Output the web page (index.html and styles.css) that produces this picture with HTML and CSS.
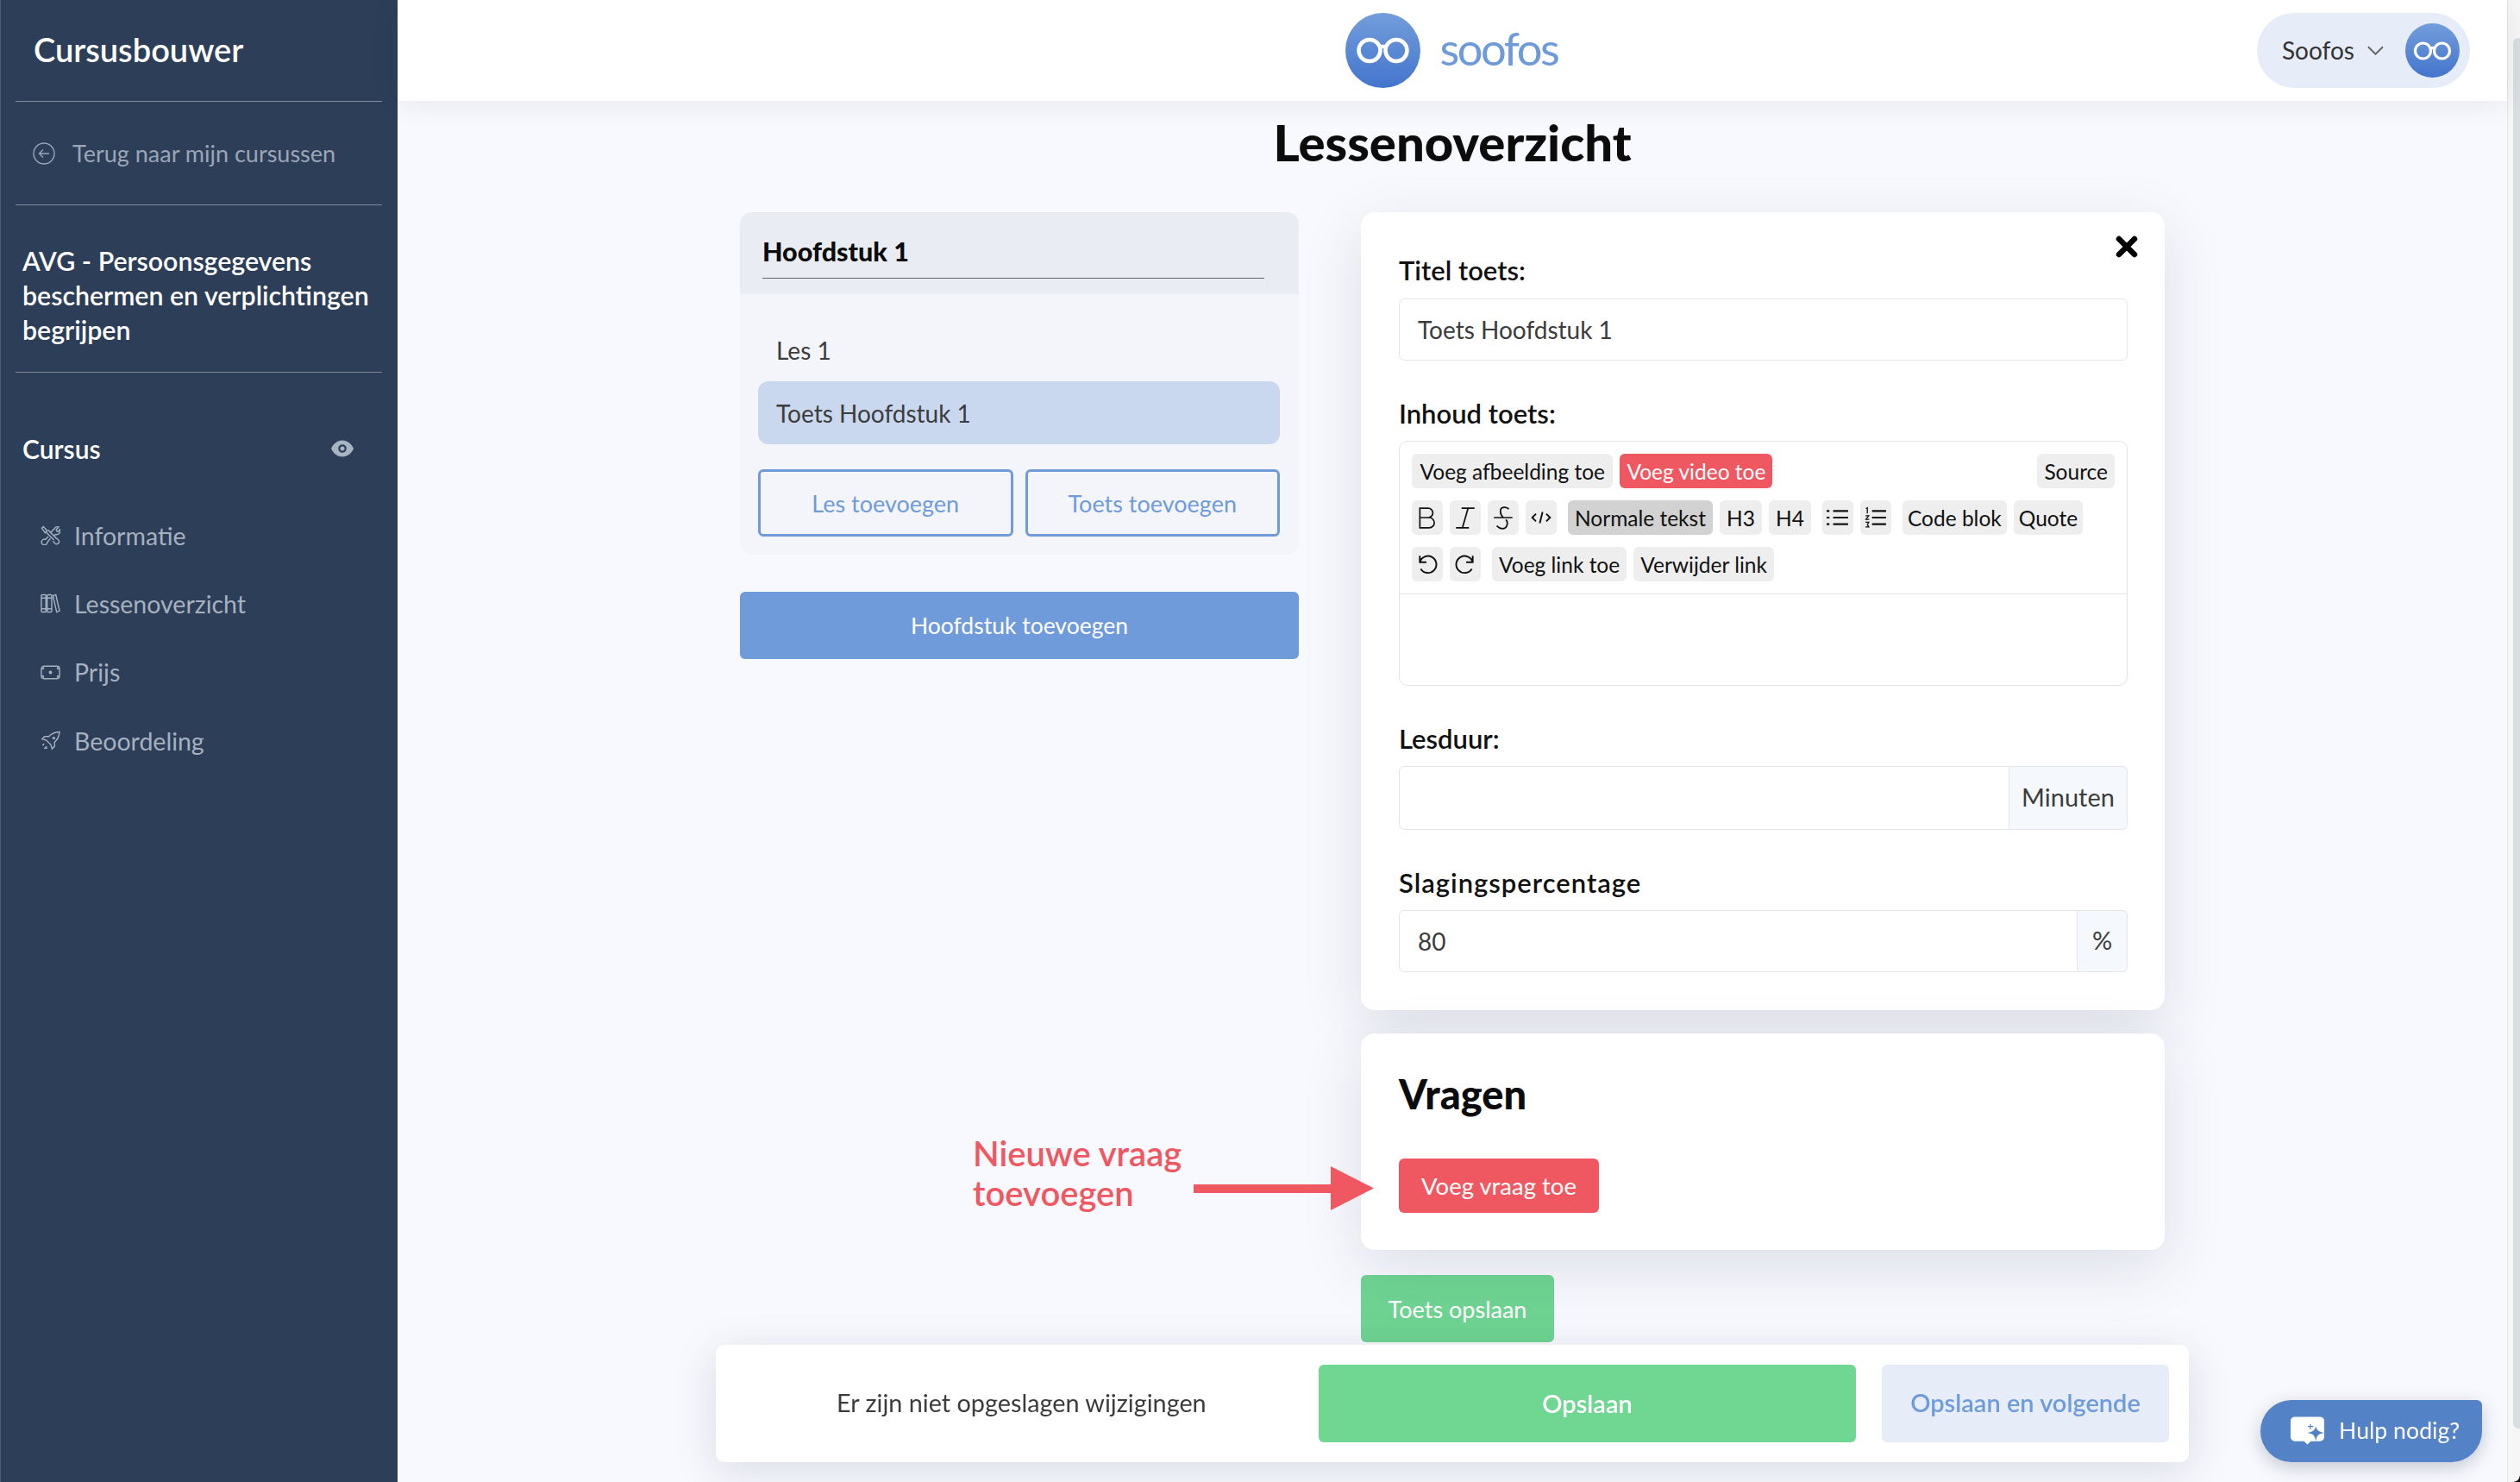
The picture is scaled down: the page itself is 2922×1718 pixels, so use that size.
FILE: index.html
```html
<!DOCTYPE html>
<html lang="nl">
<head>
    <meta charset="UTF-8">
    <meta name="viewport" content="width=device-width, initial-scale=1.0">
    <title>Cursusbouwer - Lessenoverzicht</title>
    <link rel="stylesheet" href="styles.css">
</head>
<body>
    <aside class="sidebar">
        <div class="brand">Cursusbouwer</div>
        <a class="back-link">
            <svg class="back-icon" viewBox="0 0 26 26" fill="none" stroke="currentColor" stroke-width="1.400"><circle cx="13" cy="13" r="12"/><path d="M19 13H7.500M12 8.500 7.500 13l4.500 4.500"/></svg>
            <span>Terug naar mijn cursussen</span>
        </a>
        <div class="course-title">AVG - Persoonsgegevens beschermen en verplichtingen begrijpen</div>
        <div class="section-row">
            <span>Cursus</span>
            <svg class="eye-icon" viewBox="0 0 26 20"><path fill-rule="evenodd" fill="currentColor" d="M13 .5C19 .5 24 5 26 10c-2 5-7 9.500-13 9.500S2 15 0 10C2 5 7 .5 13 .5Zm0 4.700a4.800 4.800 0 1 0 0 9.600 4.800 4.800 0 0 0 0-9.600Zm0 2.300a2.500 2.500 0 1 1 0 5 2.500 2.500 0 0 1 0-5Z"/></svg>
        </div>
        <nav class="side-nav">
            <a class="nav-item">
                <svg viewBox="0 0 24 24" fill="none" stroke="currentColor" stroke-width="1.500"><path d="M8 6.500 5.500 9 1.500 3.500l2-2Z"/><path d="M6.500 8 16 17.500M9 5.500 18.500 15l3 2.500a3 3 0 0 1-4 4.500L15 19"/><path d="M11.500 9.500 16.500 4.500a4.500 4.500 0 0 1 5.500-2.500L19 5l.5 2 2 .5 2-2.500a4.500 4.500 0 0 1-5.500 6l-1.500 1.500"/><path d="M9.500 13.500 6 17a3.500 3.500 0 1 0 2 4.500 3 3 0 0 0 .5-1.500l3.500-4"/></svg>
                <span>Informatie</span>
            </a>
            <a class="nav-item">
                <svg viewBox="0 0 24 24" fill="none" stroke="currentColor" stroke-width="1.500"><rect x="1" y="1.500" width="5.500" height="21" rx="1"/><rect x="8" y="1.500" width="5.500" height="21" rx="1"/><path d="M15 2.500 18.500 1.500 23 21l-3.500 1.500ZM1 5.500h5.500M8 5.500h5.500M1 18.500h5.500M8 18.500h5.500"/></svg>
                <span>Lessenoverzicht</span>
            </a>
            <a class="nav-item">
                <svg viewBox="0 0 24 24" fill="none" stroke="currentColor" stroke-width="1.500"><rect x="1" y="4.500" width="22" height="15" rx="3"/><circle cx="12" cy="12" r="1.300" fill="currentColor"/><path d="M1.500 7.500h2V5.500M20.500 5.500v2h2M1.500 16.500h2v2M20.500 18.500v-2h2"/></svg>
                <span>Prijs</span>
            </a>
            <a class="nav-item">
                <svg viewBox="0 0 24 24" fill="none" stroke="currentColor" stroke-width="1.500"><path d="M23 1.500c-6 .5-10 2-13 5.500H5L2 10l5 1.500L12.500 17l1.500 5 3-3v-5c3.500-3 5.500-7 6-12.500Z"/><path d="M16 8a1 1 0 1 0 .1 0M4.500 16l-2 2M7.500 19l-3 3M8 20.500l-1.500 1.500"/></svg>
                <span>Beoordeling</span>
            </a>
        </nav>
    </aside>

    <div class="main">
        <header class="topbar">
            <div class="logo">
                <svg class="logo-mark" viewBox="0 0 87 87">
                    <defs><linearGradient id="blauw" x1="0" y1="0" x2="0" y2="1"><stop offset="0" stop-color="#739ddb"/><stop offset="1" stop-color="#4375cd"/></linearGradient></defs>
                    <circle cx="43.500" cy="43.500" r="43.500" fill="url(#blauw)"/>
                    <g fill="none" stroke="#fff" stroke-width="4.500"><circle cx="28" cy="43.500" r="12.500"/><circle cx="59" cy="43.500" r="12.500"/><path d="M40 39h7"/></g>
                </svg>
                <span class="logo-text">soofos</span>
            </div>
            <div class="user-pill">
                <span>Soofos</span>
                <svg class="chevron" viewBox="0 0 20 11" fill="none" stroke="#666" stroke-width="2"><path d="M1 1l9 9 9-9"/></svg>
                <svg class="avatar" viewBox="0 0 63 63">
                    <circle cx="31.500" cy="31.500" r="31.500" fill="url(#blauw)"/>
                    <g fill="none" stroke="#fff" stroke-width="3.200"><circle cx="20.500" cy="32" r="9"/><circle cx="42.500" cy="32" r="9"/><path d="M29 28.500h5"/></g>
                </svg>
            </div>
        </header>

        <main class="content">
            <h1>Lessenoverzicht</h1>
            <div class="columns">
                <section class="left-col">
                    <div class="chapter">
                        <div class="chapter-head"><div class="chapter-title">Hoofdstuk 1</div></div>
                        <div class="chapter-body">
                            <div class="lesson">Les 1</div>
                            <div class="lesson active">Toets Hoofdstuk 1</div>
                            <div class="chapter-actions">
                                <button class="btn-outline">Les toevoegen</button>
                                <button class="btn-outline">Toets toevoegen</button>
                            </div>
                        </div>
                    </div>
                    <button class="btn-add-chapter">Hoofdstuk toevoegen</button>
                </section>

                <section class="right-col">
                    <div class="card form-card">
                        <svg class="close-icon" viewBox="0 0 28 28"><path d="M5 5l18 18M23 5 5 23" stroke="#000" stroke-width="6.500" stroke-linecap="round"/></svg>
                        <label class="field-label first">Titel toets:</label>
                        <div class="input">Toets Hoofdstuk 1</div>

                        <label class="field-label">Inhoud toets:</label>
                        <div class="editor">
                            <div class="toolbar">
                                <div class="tool-row">
                                    <span class="tool roomy">Voeg afbeelding toe</span>
                                    <span class="tool red">Voeg video toe</span>
                                    <span class="tool push">Source</span>
                                </div>
                                <div class="tool-row">
                                    <span class="tool icon"><svg viewBox="0 0 24 26" fill="none" stroke="#111" stroke-width="1.600"><path d="M4 3h9a5 5 0 0 1 0 10H4Zm0 10h10a5.500 5.500 0 0 1 0 11H4Z"/></svg></span>
                                    <span class="tool icon"><svg viewBox="0 0 24 26" fill="none" stroke="#111" stroke-width="1.600"><path d="M8 3h14M2 24h14M15 3 9 24"/></svg></span>
                                    <span class="tool icon"><svg viewBox="0 0 24 26" fill="none" stroke="#111" stroke-width="1.600"><path d="M18 4c-2-3-9-3-9 2 0 2 1 5 3 7M2 13h20M15 15c3 4 1 10-4 10-2 0-4-1-6-3"/></svg></span>
                                    <span class="tool icon"><svg viewBox="0 0 24 24" fill="none" stroke="#111" stroke-width="1.800"><path d="M6.500 8 2.500 12l4 4M17.500 8l4 4-4 4M13.500 6l-3 12"/></svg></span>
                                    <span class="tool dark gap-left">Normale tekst</span>
                                    <span class="tool heading">H3</span>
                                    <span class="tool heading">H4</span>
                                    <span class="tool icon gap-left"><svg viewBox="0 0 24 24" fill="none" stroke="#111" stroke-width="2"><path d="M7 5h16M7 12h16M7 19h16M0 5h3M0 12h3M0 19h3"/></svg></span>
                                    <span class="tool icon"><svg viewBox="0 0 24 24" fill="none" stroke="#111" stroke-width="2"><path d="M8 5h15M8 12h15M8 19h15"/><path stroke-width="1.200" d="M1.500 2.500l1.500-1v6M1 10h3.500l-3 4h3.500M1 17h3.500l-1.500 2.500 1.500 2.500H1"/></svg></span>
                                    <span class="tool tight gap-left">Code blok</span>
                                    <span class="tool tight">Quote</span>
                                </div>
                                <div class="tool-row">
                                    <span class="tool icon"><svg viewBox="0 0 24 24" fill="none" stroke="#111" stroke-width="1.800"><path d="M4 3v7h7M4 10a9 9 0 1 1 1 7"/></svg></span>
                                    <span class="tool icon"><svg viewBox="0 0 24 24" fill="none" stroke="#111" stroke-width="1.800"><path d="M20 3v7h-7M20 10a9 9 0 1 0-1 7"/></svg></span>
                                    <span class="tool gap-left">Voeg link toe</span>
                                    <span class="tool">Verwijder link</span>
                                </div>
                            </div>
                            <div class="editor-area"></div>
                        </div>

                        <label class="field-label">Lesduur:</label>
                        <div class="input-group tall">
                            <div class="input grow"></div>
                            <div class="addon wide">Minuten</div>
                        </div>

                        <label class="field-label spaced">Slagingspercentage</label>
                        <div class="input-group">
                            <div class="input grow">80</div>
                            <div class="addon">%</div>
                        </div>
                    </div>

                    <div class="card questions-card">
                        <h2>Vragen</h2>
                        <button class="btn-question">Voeg vraag toe</button>
                        <div class="hint">Nieuwe vraag<br>toevoegen</div>
                        <svg class="hint-arrow" viewBox="0 0 209 51"><path fill="#ef5861" d="M0 21h159V0l50 25.500L159 51V31H0Z"/></svg>
                    </div>

                    <button class="btn-save-test">Toets opslaan</button>
                </section>
            </div>
        </main>
    </div>

    <div class="scrollbar"><div class="scroll-thumb"></div></div>
    <div class="window-corner"></div>

    <div class="save-bar">
        <div class="save-msg">Er zijn niet opgeslagen wijzigingen</div>
        <button class="btn-save">Opslaan</button>
        <button class="btn-next">Opslaan en volgende</button>
    </div>

    <button class="help-btn">
        <svg viewBox="0 0 42 34"><path fill="#fff" d="M6 1h30a5 5 0 0 1 5 5v19a5 5 0 0 1-5 5H25l-4 4-4-4H6a5 5 0 0 1-5-5V6a5 5 0 0 1 5-5Z"/><path fill="#5482c6" d="M31 12c1 5 3 7 10 8-7 1-9 3-10 10-1-7-3-9-10-10 7-1 9-3 10-8ZM24 9.500h1.200V12H28v1.200h-2.800V16H24v-2.800h-2.500V12H24Z"/></svg>
        <span>Hulp nodig?</span>
    </button>
</body>
</html>
```

FILE: styles.css
```css
* {
    box-sizing: border-box;
}
html, body {
    height: 100%;
}
body {
    margin: 0;
    display: flex;
    overflow: hidden;
    font-family: 'Lato', 'Noto Sans', sans-serif;
    background-color: #f8f9fe;
    color: #3c3c3c;
}
button {
    font-family: inherit;
    border: none;
    cursor: pointer;
}

/* Zijbalk */
.sidebar {
    width: 461px;
    flex-shrink: 0;
    height: 100%;
    background-color: #2d3e59;
    border-left: 1px solid #4c5b74;
    padding: 0 18px 0 17px;
    color: #fff;
}
.brand {
    height: 118px;
    padding: 33px 0 0 21px;
    font-size: 38px;
    line-height: 48px;
    font-weight: 600;
    border-bottom: 1px solid #7f8a9b;
}
.back-link {
    height: 120px;
    display: flex;
    align-items: center;
    gap: 20px;
    padding-left: 20px;
    font-size: 27px;
    color: #9aa5b5;
    border-bottom: 1px solid #7f8a9b;
}
.back-icon {
    width: 26px;
    height: 26px;
}
.course-title {
    padding: 44px 0 29px 8px;
    font-size: 30.300px;
    line-height: 40px;
    font-weight: 600;
    border-bottom: 1px solid #7f8a9b;
}
.section-row {
    display: flex;
    justify-content: space-between;
    align-items: center;
    padding: 68px 33px 0 8px;
    font-size: 30px;
    line-height: 40px;
    font-weight: 600;
}
.eye-icon {
    width: 26px;
    height: 20px;
    color: #a9b4c2;
}
.side-nav {
    padding: 41px 0 0 29px;
}
.nav-item {
    height: 79.300px;
    display: flex;
    align-items: center;
    gap: 16px;
    font-size: 28.500px;
    color: #a6b1c0;
}
.nav-item svg {
    width: 23px;
    height: 23px;
    flex-shrink: 0;
}

/* Kop */
.main {
    flex: 1;
    min-width: 0;
    height: 100%;
}
.topbar {
    height: 117px;
    background-color: #fff;
    box-shadow: 0 4px 30px rgba(30, 40, 70, 0.08);
    display: flex;
    justify-content: center;
    position: relative;
}
.logo {
    display: flex;
    align-items: center;
    gap: 23px;
    margin-left: -2px;
}
.logo-mark {
    width: 87px;
    height: 87px;
}
.logo-text {
    width: 137px;
    font-size: 52.500px;
    font-weight: 400;
    letter-spacing: -2.500px;
    color: #6e9ad9;
    margin-top: -6px;
}
.user-pill {
    position: absolute;
    top: 15px;
    right: 43px;
    width: 247px;
    height: 87px;
    border-radius: 44px;
    background-color: #e6edf8;
    display: flex;
    align-items: center;
    padding-left: 29px;
    font-size: 28px;
    color: #333;
}
.user-pill span {
    margin-top: -2px;
}
.chevron {
    width: 19px;
    height: 11px;
    margin-left: 15px;
}
.avatar {
    width: 63px;
    height: 63px;
    margin-left: 25px;
}

/* Inhoud */
h1 {
    margin: 0;
    height: 129px;
    padding-top: 17px;
    text-align: center;
    font-size: 58px;
    line-height: 62px;
    font-weight: 900;
    color: #0c0c0c;
}
.columns {
    width: 1652px;
    margin: 0 auto;
    display: flex;
    gap: 72px;
    align-items: flex-start;
}
.left-col {
    width: 648px;
}
.right-col {
    width: 932px;
}
.chapter {
    border-radius: 14px;
    overflow: hidden;
    background-color: #f3f5fa;
    height: 397px;
}
.chapter-head {
    height: 95px;
    background-color: #e9ecf3;
    padding: 0 40px 0 26px;
}
.chapter-title {
    height: 77px;
    padding-top: 25px;
    font-size: 30.500px;
    line-height: 40px;
    font-weight: 900;
    color: #0c0c0c;
    border-bottom: 1px solid #666;
}
.chapter-body {
    padding: 28px 22px 0 21px;
}
.lesson {
    height: 73px;
    padding: 0 21px;
    display: flex;
    align-items: center;
    font-size: 28px;
    border-radius: 12px;
}
.lesson.active {
    background-color: #cad8ef;
}
.chapter-actions {
    display: flex;
    gap: 14px;
    margin-top: 29px;
}
.btn-outline {
    flex: 1;
    height: 78px;
    background: transparent;
    border: 3px solid #6f9bdb;
    border-radius: 6px;
    font-size: 27px;
    color: #6f9bdb;
}
.btn-add-chapter {
    display: block;
    width: 100%;
    height: 78px;
    margin-top: 43px;
    background-color: #6f9bdb;
    border-radius: 6px;
    font-size: 26.500px;
    color: #fff;
}

/* Kaarten */
.card {
    background-color: #fff;
    border-radius: 16px;
    box-shadow: 0 20px 70px rgba(40, 50, 80, 0.13);
    position: relative;
}
.form-card {
    height: 925px;
    padding: 47px 43px 0 44px;
}
.close-icon {
    position: absolute;
    top: 26px;
    right: 30px;
    width: 28px;
    height: 28px;
}
.field-label {
    display: block;
    font-size: 31px;
    line-height: 40px;
    font-weight: 600;
    color: #111;
    margin: 41px 0 12px;
}
.field-label.first {
    margin: 0 0 13px;
}
.field-label.spaced {
    letter-spacing: 1px;
}
.input {
    height: 72px;
    padding: 0 21px;
    display: flex;
    align-items: center;
    border: 1px solid #e3e5e9;
    border-radius: 6px;
    font-size: 28px;
    background-color: #fff;
}
.input-group {
    display: flex;
}
.input-group.tall .input {
    height: 74px;
}
.input.grow {
    flex: 1;
    border-radius: 6px 0 0 6px;
}
.addon {
    width: 58px;
    padding-bottom: 3px;
    display: flex;
    align-items: center;
    justify-content: center;
    font-size: 29px;
    background-color: #f5f8fd;
    border: 1px solid #e3e5e9;
    border-left: none;
    border-radius: 0 6px 6px 0;
}
.addon.wide {
    width: 137px;
}
.editor {
    height: 284px;
    border: 1px solid #e1e3e7;
    border-radius: 10px;
}
.toolbar {
    height: 177px;
    padding: 14px 14px 0;
    border-bottom: 1px solid #e1e3e7;
}
.tool-row {
    display: flex;
    gap: 8px;
    margin-bottom: 14px;
}
.tool {
    height: 40px;
    padding: 0 8px;
    display: flex;
    align-items: center;
    background-color: #eeeeee;
    border-radius: 6px;
    font-size: 24.500px;
    color: #111;
}
.tool.roomy {
    padding: 0 9.500px;
}
.tool.tight {
    padding: 0 6px;
}
.tool.heading {
    width: 49px;
    padding: 0;
    justify-content: center;
}
.tool.icon {
    width: 36px;
    padding: 0;
    justify-content: center;
}
.tool.icon svg {
    width: 26px;
    height: 28px;
}
.tool.red {
    background-color: #ef5861;
    color: #fff;
}
.tool.dark {
    background-color: #d2d2d2;
}
.tool.push {
    margin-left: auto;
}
.gap-left {
    margin-left: 5px;
}

/* Vragen */
.questions-card {
    height: 251px;
    margin-top: 27px;
    padding: 44px 44px 0;
}
h2 {
    margin: 0;
    font-size: 47px;
    line-height: 52px;
    font-weight: 900;
    color: #0c0c0c;
}
.btn-question {
    display: block;
    width: 232px;
    height: 63px;
    margin-top: 49px;
    background-color: #ef5861;
    border-radius: 6px;
    font-size: 27.500px;
    color: #fff;
}
.hint {
    position: absolute;
    left: -450px;
    top: 116px;
    font-size: 40px;
    line-height: 46px;
    font-weight: 600;
    color: #ef5861;
}
.hint-arrow {
    position: absolute;
    left: -194px;
    top: 154px;
    width: 209px;
    height: 51px;
}
.btn-save-test {
    display: block;
    width: 224px;
    height: 78px;
    margin-top: 29px;
    background-color: #6fd492;
    border-radius: 6px;
    font-size: 27px;
    color: #fff;
}

/* Opslaan balk, ligt over de pagina */
.save-bar {
    position: fixed;
    left: 830px;
    top: 1559px;
    width: 1708px;
    height: 136px;
    display: flex;
    align-items: center;
    padding-right: 23px;
    background-color: #fff;
    border-radius: 10px;
    box-shadow: 0 10px 50px rgba(40, 50, 80, 0.15);
}
.save-msg {
    width: 699px;
    padding: 0 0 2px 140px;
    font-size: 28.800px;
}
.btn-save {
    width: 623px;
    height: 90px;
    padding-bottom: 3px;
    background-color: #70d793;
    border-radius: 6px;
    font-size: 29px;
    font-weight: 600;
    color: #fff;
}
.btn-next {
    width: 333px;
    height: 90px;
    padding: 0 0 3px;
    margin-left: 30px;
    background-color: #e6edf8;
    border-radius: 6px;
    font-size: 29px;
    font-weight: 600;
    color: #6f9bdb;
}
.help-btn {
    position: fixed;
    left: 2621px;
    top: 1623px;
    width: 257px;
    height: 72px;
    padding: 0 0 2px 34px;
    display: flex;
    align-items: center;
    gap: 16px;
    background-color: #5482c6;
    border-radius: 36px 6px 36px 36px;
    font-size: 26.700px;
    color: #fff;
    box-shadow: 0 6px 20px rgba(40, 50, 80, 0.25);
}
.help-btn svg {
    width: 41px;
    height: 34px;
}

/* Scrollbalk */
.scrollbar {
    width: 15px;
    flex-shrink: 0;
    height: 100%;
    background-color: #f6f6f6;
    border-left: 1px solid #e4e4e4;
    padding: 44px 0 62px 6px;
}
.scroll-thumb {
    height: 100%;
    background-color: #d9dee3;
    border-radius: 6px 0 0 6px;
}
.window-corner {
    position: fixed;
    right: 0;
    bottom: 0;
    width: 7px;
    height: 7px;
    background: radial-gradient(circle at 0 0, transparent 6px, #111 7px);
}
```
